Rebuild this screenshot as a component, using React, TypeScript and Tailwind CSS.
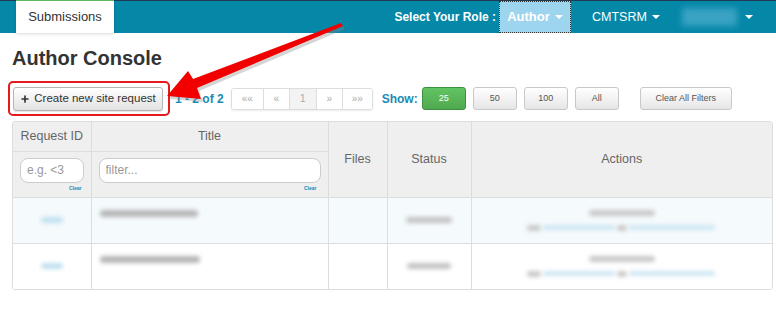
import { Plus } from "lucide-react";

function Caret() {
  return (
    <span className="ml-[5px] inline-block h-0 w-0 border-x-[4px] border-t-[4px] border-x-transparent border-t-white" />
  );
}

function ShowButton({ label, active }: { label: string; active?: boolean }) {
  return (
    <button
      className={
        active
          ? "h-[23px] w-[44px] rounded-[3px] border border-[#3e8f3e] bg-gradient-to-b from-[#62c462] to-[#4fa94f] text-[9px] text-white"
          : "h-[23px] w-[44px] rounded-[3px] border border-[#c8c8c8] bg-gradient-to-b from-white to-[#e6e6e6] text-[9px] text-[#555]"
      }
    >
      {label}
    </button>
  );
}

function Blur({ className }: { className: string }) {
  return <div className={"rounded-sm blur-[2px] " + className} />;
}

export default function App() {
  const pages = [
    { label: "««", w: "w-[31px]" },
    { label: "«", w: "w-[26px]" },
    { label: "1", w: "w-[27px]", active: true },
    { label: "»", w: "w-[26px]" },
    { label: "»»", w: "w-[30px]" },
  ];

  const rows = [
    { bg: "bg-[#f5fafd]", title: "w-[98px]", status: "w-[46px]" },
    { bg: "bg-white", title: "w-[100px]", status: "w-[44px]" },
  ];

  return (
    <div className="relative h-[311px] w-[776px] overflow-hidden bg-white font-['Liberation_Sans',Arial,sans-serif]">
      {/* top nav */}
      <div className="flex h-[33px] items-stretch border-t border-[#1d3a52] bg-[#0587a8]">
        <div className="-mt-px ml-[16px] flex w-[98px] items-center justify-center border-t border-[#5cb85c] bg-white text-[13px] text-[#333] shadow-[0_1px_3px_rgba(0,0,0,0.15)]">
          Submissions
        </div>
        <div className="ml-auto flex items-center pr-[3px] text-[12px] font-bold text-white">
          Select Your Role :
        </div>
        <div className="flex w-[72px] items-center justify-center border border-dotted border-[#333] bg-[#9ed5ee] text-[13px] font-bold text-white">
          Author
          <Caret />
        </div>
        <div className="flex w-[95px] items-center pl-[21px] text-[12.5px] text-white">
          CMTSRM
          <Caret />
        </div>
        <div className="flex items-center pl-[16px] pr-[23px]">
          <div className="h-[18px] w-[55px] bg-[#3aa3c3] blur-[3px]" />
          <span className="ml-[8px] inline-block h-0 w-0 border-x-[4px] border-t-[4px] border-x-transparent border-t-white" />
        </div>
      </div>

      {/* title */}
      <h1 className="ml-3 mt-[13px] text-[20px] font-bold leading-[24px] text-[#333]">
        Author Console
      </h1>

      {/* toolbar */}
      <div className="ml-[8px] mt-[11px] flex items-center">
        <div className="h-[35px] w-[162px] rounded-[5px] border-2 border-[#e8191d] pl-[3px] pt-[4px]">
          <button className="flex h-[24px] w-[150px] items-center justify-center gap-[4px] rounded-[3px] border border-[#b5b5b5] bg-gradient-to-b from-white to-[#e2e2e2] text-[11.5px] text-[#333] shadow-[0_1px_1px_rgba(0,0,0,0.1)]">
            <Plus size={10} strokeWidth={4} />
            Create new site request
          </button>
        </div>
        <span className="ml-[5px] text-[12px] font-bold text-[#1a8ab5]">1 - 2 of 2</span>
        <div className="ml-[7px] flex h-[22px] overflow-hidden rounded-[3px] border border-[#ddd] shadow-[0_1px_2px_rgba(0,0,0,0.08)]">
          {pages.map((p, i) => (
            <div
              key={i}
              className={
                "flex items-center justify-center border-l border-[#ddd] text-[10px] text-[#aaa] first:border-l-0 " +
                p.w +
                (p.active ? " bg-[#f3f3f3]" : " bg-white")
              }
            >
              {p.label}
            </div>
          ))}
        </div>
        <span className="ml-[9px] text-[12px] font-bold text-[#1a8ab5]">Show:</span>
        <div className="ml-[4px] flex gap-[7px]">
          <ShowButton label="25" active />
          <ShowButton label="50" />
          <ShowButton label="100" />
          <ShowButton label="All" />
        </div>
        <button className="ml-[21px] h-[23px] w-[92px] rounded-[3px] border border-[#c8c8c8] bg-gradient-to-b from-white to-[#e6e6e6] text-[9px] text-[#555]">
          Clear All Filters
        </button>
      </div>

      {/* table */}
      <div className="ml-3 mt-[5px] w-[761px] overflow-hidden rounded-[3px] border border-[#ddd]">
        <table className="w-full table-fixed border-collapse border-hidden text-[12.5px] text-[#666]">
          <colgroup>
            <col className="w-[78px]" />
            <col className="w-[237px]" />
            <col className="w-[59px]" />
            <col className="w-[84px]" />
            <col />
          </colgroup>
          <thead className="bg-[#efefef]">
            <tr className="h-[29px]">
              <th className="border border-[#ddd] font-normal">Request ID</th>
              <th className="border border-[#ddd] font-normal">Title</th>
              <th rowSpan={2} className="border border-[#ddd] font-normal">Files</th>
              <th rowSpan={2} className="border border-[#ddd] font-normal">Status</th>
              <th rowSpan={2} className="border border-[#ddd] font-normal">Actions</th>
            </tr>
            <tr className="h-[46px]">
              <th className="border border-[#ddd] px-[7px] pt-[6px] align-top font-normal">
                <input
                  placeholder="e.g. <3"
                  className="h-[25px] w-full rounded-[8px] border border-[#ccc] bg-white px-[6px] text-[12px] placeholder:text-[#999]"
                />
                <div className="pr-[2px] text-right text-[5px] font-bold leading-[10px] text-[#1a8ab5]">Clear</div>
              </th>
              <th className="border border-[#ddd] px-[7px] pt-[6px] align-top font-normal">
                <input
                  placeholder="filter..."
                  className="h-[25px] w-full rounded-[8px] border border-[#ccc] bg-white px-[6px] text-[12px] placeholder:text-[#999]"
                />
                <div className="pr-[4px] text-right text-[5px] font-bold leading-[10px] text-[#1a8ab5]">Clear</div>
              </th>
            </tr>
          </thead>
          <tbody>
            {rows.map((r, i) => (
              <tr key={i} className={"h-[46px] " + r.bg}>
                <td className="border border-[#ddd]">
                  <Blur className="mx-auto h-[6px] w-[22px] bg-[#bfe0ef]" />
                </td>
                <td className="border border-[#ddd] px-[8px] pt-[12px] align-top">
                  <Blur className={"h-[7px] bg-[#b5b5b5] " + r.title} />
                </td>
                <td className="border border-[#ddd]" />
                <td className="border border-[#ddd]">
                  <Blur className={"mx-auto h-[6px] bg-[#c2c2c2] " + r.status} />
                </td>
                <td className="border border-[#ddd]">
                  <Blur className="mx-auto h-[6px] w-[66px] bg-[#c8c8c8]" />
                  <div className="mx-auto mt-[9px] flex w-[190px] items-center gap-[2px]">
                    <Blur className="h-[6px] w-[14px] bg-[#c8c8c8]" />
                    <Blur className="h-[5px] w-[72px] bg-[#cde6f2]" />
                    <Blur className="h-[6px] w-[10px] bg-[#c8c8c8]" />
                    <Blur className="h-[5px] w-[86px] bg-[#cde6f2]" />
                  </div>
                </td>
              </tr>
            ))}
          </tbody>
        </table>
      </div>

      {/* annotation arrow */}
      <svg className="pointer-events-none absolute left-0 top-0" width="776" height="311">
        <polygon
          points="167,96 188,71 193,79 341,23 343,26 197,88 201,99"
          fill="#888"
          opacity="0.35"
          transform="translate(2,3)"
        />
        <polygon points="167,96 188,71 193,79 341,23 343,26 197,88 201,99" fill="#f20000" />
      </svg>
    </div>
  );
}
